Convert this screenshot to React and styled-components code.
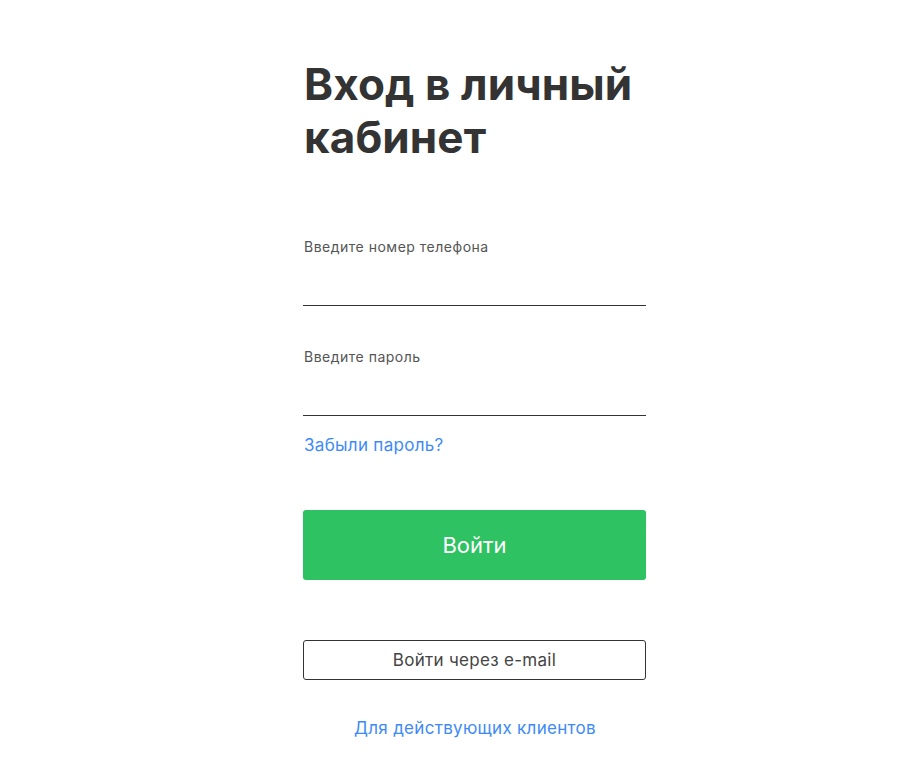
import styled, { createGlobalStyle } from "styled-components";

const GlobalStyle = createGlobalStyle`
  body {
    margin: 0;
    background: #fff;
    font-family: Inter, "Noto Sans", sans-serif;
    color: #333;
  }
`;

const Page = styled.div`
  display: flex;
  padding: 58px 0 0 303px;
`;

const Form = styled.form`
  width: 343px;
  display: flex;
  flex-direction: column;
`;

const Title = styled.h1`
  margin: 0 0 74px 1px;
  font-size: 44px;
  line-height: 53px;
  font-weight: 700;
  letter-spacing: 0.1px;
  color: #333;
`;

const Field = styled.label`
  display: flex;
  flex-direction: column;
  margin-bottom: ${props => props.gap}px;
`;

const Label = styled.span`
  font-size: 14px;
  line-height: 18px;
  letter-spacing: 0.5px;
  color: #555;
  margin-left: 1px;
`;

const Input = styled.input`
  border: none;
  border-bottom: 1px solid #333;
  outline: none;
  height: 48px;
  margin-top: 1px;
  padding: 0;
  font-family: inherit;
  font-size: 17px;
  background: transparent;
`;

const Link = styled.a`
  color: #3d8af7;
  font-size: 17px;
  line-height: 20px;
  letter-spacing: 0.3px;
  text-decoration: none;
  cursor: pointer;
  margin-left: 1px;
`;

const Forgot = styled(Link)`
  align-self: flex-start;
  margin-top: 19px;
`;

const Submit = styled.button`
  margin-top: 55px;
  height: 70px;
  border: none;
  border-radius: 3px;
  background: #2ec262;
  color: #fff;
  font-family: inherit;
  font-size: 22px;
  cursor: pointer;
`;

const Outline = styled.button`
  margin-top: 60px;
  height: 40px;
  border: 1px solid #333;
  border-radius: 3px;
  background: #fff;
  color: #444;
  font-family: inherit;
  font-size: 17px;
  letter-spacing: 0.3px;
  cursor: pointer;
`;

const Clients = styled(Link)`
  align-self: center;
  margin-top: 38px;
`;

export default function App() {
  return (
    <>
      <GlobalStyle />
      <Page>
        <Form onSubmit={e => e.preventDefault()}>
          <Title>Вход в личный кабинет</Title>
          <Field gap={42}>
            <Label>Введите номер телефона</Label>
            <Input type="tel" />
          </Field>
          <Field gap={0}>
            <Label>Введите пароль</Label>
            <Input type="password" />
          </Field>
          <Forgot>Забыли пароль?</Forgot>
          <Submit type="submit">Войти</Submit>
          <Outline type="button">Войти через e-mail</Outline>
          <Clients>Для действующих клиентов</Clients>
        </Form>
      </Page>
    </>
  );
}
